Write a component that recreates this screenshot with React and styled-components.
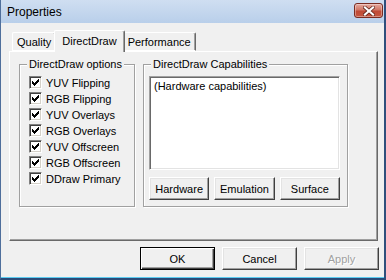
import React from 'react';
import styled, { createGlobalStyle } from 'styled-components';

const GlobalStyle = createGlobalStyle`
  html, body {
    margin: 0;
    padding: 0;
    background: #f0f0f0;
    overflow: hidden;
  }
  body {
    font-family: "Liberation Sans", Arial, sans-serif;
    font-size: 11px;
    color: #000;
  }
`;

const Window = styled.div`
  box-sizing: border-box;
  width: 386px;
  height: 280px;
  display: flex;
  flex-direction: column;
  background: #f0f0f0;
  border-left: 1px solid #4f6f9c;
  border-right: 2px solid #2f4f7c;
  border-bottom: 2px solid #2a4a78;
`;

const TitleBar = styled.div`
  flex: 0 0 23px;
  display: flex;
  align-items: center;
  justify-content: space-between;
  padding: 0 1px 0 6px;
  background: linear-gradient(#cfdef1, #b9cfea);
  font-size: 12px;
`;

const CloseButton = styled.div`
  box-sizing: border-box;
  width: 29px;
  height: 15px;
  margin-top: -2px;
  display: flex;
  align-items: center;
  justify-content: center;
  border: 1px solid #7a2c22;
  border-radius: 3px;
  background: linear-gradient(#e6aaa0 0%, #d07766 45%, #c04a36 55%, #c4563f 100%);
  box-shadow: inset 0 0 0 1px rgba(255, 255, 255, 0.35);
`;

const Body = styled.div`
  flex: 1;
  display: flex;
  flex-direction: column;
  padding: 7px 6px 0 8px;
  border-bottom: 1px solid #5ccbf0;
`;

const TabRow = styled.div`
  display: flex;
  align-items: flex-end;
  height: 22px;
  padding-left: 3px;
  position: relative;
  z-index: 1;
  margin-bottom: -1px;
`;

const Tab = styled.div`
  box-sizing: border-box;
  height: ${p => (p.$active ? '22px' : '19px')};
  margin: ${p => (p.$active ? '0 -2px' : '0 0 1px')};
  padding: ${p => (p.$active ? '3px 7px 0' : '2px 4px 0')};
  border: 1px solid;
  border-color: #fff #696969 #fff #fff;
  border-bottom: ${p => (p.$active ? 'none' : '1px solid #fff')};
  border-radius: 2px 2px 0 0;
  box-shadow: inset -1px 0 #a0a0a0;
  background: #f0f0f0;
  position: relative;
  z-index: ${p => (p.$active ? 2 : 1)};
  white-space: nowrap;
  line-height: 14px;
`;

const Panel = styled.div`
  box-sizing: border-box;
  height: 190px;
  display: flex;
  gap: 8px;
  padding: 12px 9px 0 9px;
  border: 1px solid;
  border-color: #fff #696969 #696969 #fff;
  box-shadow: inset -1px -1px #a0a0a0;
`;

const Group = styled.div`
  box-sizing: border-box;
  position: relative;
  width: ${p => p.$width}px;
  height: 143px;
  border: 1px solid #a0a0a0;
  box-shadow: inset 1px 1px #fff, 1px 1px #fff;
  padding: ${p => p.$pad};
`;

const Legend = styled.span`
  position: absolute;
  top: -7px;
  left: 7px;
  padding: 0 2px;
  background: #f0f0f0;
  line-height: 13px;
  white-space: nowrap;
`;

const CheckList = styled.div`
  display: flex;
  flex-direction: column;
  gap: 3px;
`;

const CheckRow = styled.label`
  display: flex;
  align-items: center;
  gap: 4px;
  height: 13px;
  white-space: nowrap;
`;

const CheckBox = styled.span`
  box-sizing: border-box;
  width: 13px;
  height: 13px;
  display: flex;
  align-items: center;
  justify-content: center;
  background: #fff;
  border: 1px solid;
  border-color: #808080 #fff #fff #808080;
  box-shadow: inset 1px 1px #404040, inset -1px -1px #d4d0c8;
`;

const ListBox = styled.div`
  box-sizing: border-box;
  height: 94px;
  padding: 3px 4px;
  background: #fff;
  border: 1px solid;
  border-color: #a0a0a0 #fff #fff #a0a0a0;
  box-shadow: inset 1px 1px #696969, inset -1px -1px #e3e3e3;
  line-height: 13px;
  white-space: nowrap;
`;

const ButtonGrid = styled.div`
  display: grid;
  grid-template-columns: repeat(3, 1fr);
  gap: 5px;
  margin-top: 7px;
`;

const Button = styled.div`
  box-sizing: border-box;
  height: 23px;
  width: ${p => (p.$width ? `${p.$width}px` : 'auto')};
  display: flex;
  align-items: center;
  justify-content: center;
  background: #f0f0f0;
  border: 1px solid;
  border-color: ${p => (p.$default ? '#000' : '#fff #404040 #404040 #fff')};
  box-shadow: ${p =>
    p.$default
      ? 'inset 1px 1px #fff, inset -1px -1px #404040, inset -2px -2px #a0a0a0'
      : 'inset -1px -1px #a0a0a0, inset 1px 1px #e3e3e3'};
  color: ${p => (p.$disabled ? '#a0a0a0' : '#000')};
  text-shadow: ${p => (p.$disabled ? '1px 1px #fff' : 'none')};
`;

const Footer = styled.div`
  display: flex;
  justify-content: flex-end;
  gap: 7px;
  margin: 6px -1px 0 0;
`;

const CheckMark = () => (
  <svg width="7" height="7" viewBox="0 0 7 7" shapeRendering="crispEdges">
    <path
      fill="#000"
      d="M0 2h1v3H0zM1 3h1v3H1zM2 4h1v3H2zM3 3h1v3H3zM4 2h1v3H4zM5 1h1v3H5zM6 0h1v3H6z"
    />
  </svg>
);

const CloseGlyph = () => (
  <svg width="12" height="10" viewBox="0 0 12 10">
    <path
      d="M2 1.5 L10 8.5 M10 1.5 L2 8.5"
      stroke="#5a1f16"
      strokeWidth="3.6"
      strokeLinecap="square"
    />
    <path
      d="M2 1.5 L10 8.5 M10 1.5 L2 8.5"
      stroke="#fff"
      strokeWidth="2.2"
      strokeLinecap="square"
    />
  </svg>
);

const options = [
  'YUV Flipping',
  'RGB Flipping',
  'YUV Overlays',
  'RGB Overlays',
  'YUV Offscreen',
  'RGB Offscreen',
  'DDraw Primary',
];

export default function App() {
  return (
    <>
      <GlobalStyle />
      <Window>
        <TitleBar>
          <span>Properties</span>
          <CloseButton>
            <CloseGlyph />
          </CloseButton>
        </TitleBar>
        <Body>
          <TabRow>
            <Tab>Quality</Tab>
            <Tab $active>DirectDraw</Tab>
            <Tab>Performance</Tab>
          </TabRow>
          <Panel>
            <Group $width={116} $pad="11px 0 0 9px">
              <Legend>DirectDraw options</Legend>
              <CheckList>
                {options.map(o => (
                  <CheckRow key={o}>
                    <CheckBox>
                      <CheckMark />
                    </CheckBox>
                    {o}
                  </CheckRow>
                ))}
              </CheckList>
            </Group>
            <Group $width={205} $pad="11px 7px 0 5px">
              <Legend>DirectDraw Capabilities</Legend>
              <ListBox>(Hardware capabilities)</ListBox>
              <ButtonGrid>
                <Button>Hardware</Button>
                <Button>Emulation</Button>
                <Button>Surface</Button>
              </ButtonGrid>
            </Group>
          </Panel>
          <Footer>
            <Button $default $width={75}>OK</Button>
            <Button $width={75}>Cancel</Button>
            <Button $disabled $width={75}>Apply</Button>
          </Footer>
        </Body>
      </Window>
    </>
  );
}
